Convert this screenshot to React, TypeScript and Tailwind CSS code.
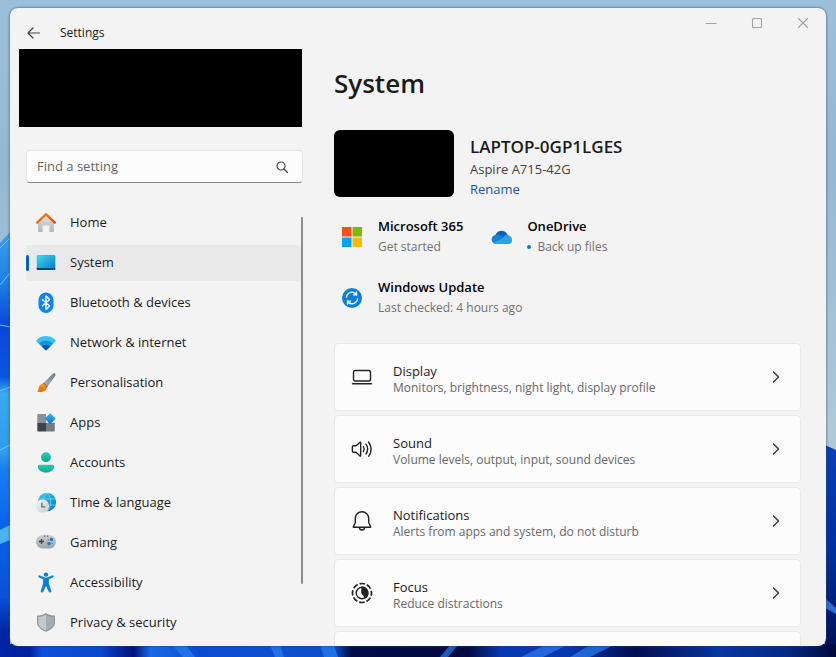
import React from "react";

type Item = { label: string; icon: React.ReactNode; active?: boolean };

const ic = "h-5 w-5 shrink-0 overflow-visible";

const HomeIcon = () => (
  <svg viewBox="0 0 20 20" className={ic} aria-hidden="true">
    <defs>
      <linearGradient id="homeWall" x1="0" y1="0" x2="0" y2="1"><stop offset="0" stopColor="#e4e4e4" /><stop offset="1" stopColor="#b4b4b4" /></linearGradient>
      <linearGradient id="homeRoof" x1="0" y1="0" x2="1" y2="1"><stop offset="0" stopColor="#f9930f" /><stop offset="1" stopColor="#d2490c" /></linearGradient>
    </defs>
    <path d="M2 9 10 1.800 18 9v9.200a.8.800 0 0 1-.8.800H13.400v-6.600H6.600V19H2.800a.8.800 0 0 1-.8-.8Z" fill="url(#homeWall)" />
    <path d="M1.200 9.600 10 1.200l8.800 8.400" fill="none" stroke="url(#homeRoof)" strokeWidth="2.300" strokeLinecap="round" strokeLinejoin="round" />
  </svg>
);

const SystemIcon = () => (
  <svg viewBox="0 0 20 20" className={ic} aria-hidden="true">
    <defs><linearGradient id="sysScreen" x1="0" y1="0" x2="1" y2="1"><stop offset="0" stopColor="#3bdcec" /><stop offset="1" stopColor="#0b78c4" /></linearGradient></defs>
    <rect x=".7" y="2" width="18.600" height="15" rx="1.200" fill="url(#sysScreen)" />
    <path d="M.7 15h18.600v.9a1.200 1.200 0 0 1-1.200 1.200H1.900A1.200 1.200 0 0 1 .7 15.900Z" fill="#0b4568" />
    <path d="M14.500 16h1M17 16h1" stroke="#5bc5e8" strokeWidth=".7" />
  </svg>
);

const BluetoothIcon = () => (
  <svg viewBox="0 0 20 20" className={ic} aria-hidden="true">
    <rect x="2.500" y="-.5" width="15" height="20.500" rx="7.500" fill="#0a84ff" />
    <path d="m6 6.200 7.600 6.900-3.600 3.500V3l3.600 3.500L6 13.300" fill="none" stroke="#fff" strokeWidth="1.400" strokeLinejoin="round" />
  </svg>
);

const WifiIcon = () => (
  <svg viewBox="0 0 20 20" className={ic} aria-hidden="true">
    <path d="M.4 7.200C5.800 1.700 14.200 1.700 19.600 7.200c.3.300.3.700 0 1L10.600 17c-.4.300-.8.300-1.200 0L.4 8.200a.7.700 0 0 1 0-1Z" fill="#35c5f2" />
    <path d="M2.800 10.400a10.200 10.200 0 0 1 14.400 0l-6.600 6.600c-.4.300-.8.300-1.200 0Z" fill="#1493dd" />
    <path d="M5.800 13.400a6 6 0 0 1 8.400 0L10.600 17c-.4.300-.8.300-1.200 0Z" fill="#0a55a5" />
  </svg>
);

const BrushIcon = () => (
  <svg viewBox="0 0 20 20" className={ic} aria-hidden="true">
    <defs>
      <linearGradient id="brushHandle" x1="1" y1="0" x2="0" y2="1"><stop offset="0" stopColor="#6c7882" /><stop offset="1" stopColor="#b3bac0" /></linearGradient>
      <linearGradient id="brushTip" x1="0" y1="0" x2="0" y2="1"><stop offset="0" stopColor="#ff9b1c" /><stop offset="1" stopColor="#ef6410" /></linearGradient>
    </defs>
    <path d="M18.900.5c.8.600.8 1.400.3 2.200L11.400 13.800 7.200 10.200 16.800.8c.7-.6 1.400-.7 2.100-.3Z" fill="url(#brushHandle)" />
    <path d="m7.800 9.700 4 3.500-1.200 1.700-4.200-3.700Z" fill="#5d6974" />
    <path d="M6.400 11.100c2.300-.2 4.500 1.600 4.200 3.900-.4 3.400-5.400 4.800-9.800 3.500 1.600-.9 1.500-1.700 1.900-3.600.4-2.200 1.800-3.600 3.700-3.800Z" fill="url(#brushTip)" />
  </svg>
);

const AppsIcon = () => (
  <svg viewBox="0 0 20 20" className={ic} aria-hidden="true">
    <defs><linearGradient id="appDiamond" x1="0" y1="0" x2="1" y2="1"><stop offset="0" stopColor="#38b9f5" /><stop offset="1" stopColor="#0876d8" /></linearGradient></defs>
    <path d="M2.200 1H10v8.700H1.300V1.900a.9.900 0 0 1 .9-.9Z" fill="#89929b" />
    <path d="M1.300 9.700H10v8.800H2.200a.9.900 0 0 1-.9-.9Z" fill="#3f454a" />
    <path d="M10 9.700h8.800v7.900a.9.900 0 0 1-.9.900H10Z" fill="#737b84" />
    <rect x="10.300" y="1.700" width="7.800" height="7.800" rx="1" transform="rotate(45 14.200 5.600)" fill="url(#appDiamond)" />
  </svg>
);

const AccountsIcon = () => (
  <svg viewBox="0 0 20 20" className={ic} aria-hidden="true">
    <defs><linearGradient id="person" x1="0" y1="0" x2="0" y2="1"><stop offset="0" stopColor="#25d0a5" /><stop offset="1" stopColor="#10a894" /></linearGradient></defs>
    <circle cx="10" cy="4.200" r="4.900" fill="url(#person)" />
    <path d="M3.600 11.700h12.800c1 0 1.700.8 1.700 1.700 0 3.600-3.400 6-8.100 6s-8.100-2.400-8.100-6c0-.9.700-1.700 1.700-1.700Z" fill="url(#person)" />
  </svg>
);

const TimeIcon = () => (
  <svg viewBox="0 0 20 20" className={ic} aria-hidden="true">
    <defs>
      <linearGradient id="globe" x1="0" y1="0" x2="1" y2="1"><stop offset="0" stopColor="#39c9ed" /><stop offset="1" stopColor="#0a78c4" /></linearGradient>
      <linearGradient id="clock" x1="0" y1="0" x2="1" y2="1"><stop offset="0" stopColor="#f4f5f6" /><stop offset="1" stopColor="#c5cbd0" /></linearGradient>
    </defs>
    <circle cx="11" cy="9" r="9.200" fill="url(#globe)" />
    <path d="M2.500 6h17M11 12h8.500M11 0c-5 5-5 13 0 18M11 0c5 5 5 13 0 18" fill="none" stroke="#72dff4" strokeWidth=".7" />
    <circle cx="6.500" cy="13" r="6.600" fill="url(#clock)" />
    <path d="M5.900 9.700v4.100h3.400" fill="none" stroke="#656b72" strokeWidth="1.300" />
  </svg>
);

const GamingIcon = () => (
  <svg viewBox="0 0 20 20" className={ic} aria-hidden="true">
    <defs><linearGradient id="pad" x1="0" y1="0" x2="0" y2="1"><stop offset="0" stopColor="#cbd0d4" /><stop offset="1" stopColor="#9ca3ab" /></linearGradient></defs>
    <rect y="2" width="20" height="13.500" rx="6.500" fill="url(#pad)" />
    <path d="M3 8.500h5M5.500 6v5" stroke="#3d4349" strokeWidth="1.300" />
    <path d="M8 3.200h1.200M11 3.200h1.200" stroke="#4c5259" strokeWidth="1" />
    <circle cx="15.400" cy="6.500" r="1.700" fill="#0a7bd3" /><circle cx="12.900" cy="10.600" r="1.700" fill="#0a7bd3" />
    <circle cx="12.300" cy="6.900" r=".7" fill="#777f87" /><circle cx="16" cy="10.300" r=".7" fill="#777f87" />
  </svg>
);

const AccessibilityIcon = () => (
  <svg viewBox="0 0 20 20" className={ic} aria-hidden="true">
    <circle cx="10" cy="1.600" r="2.200" fill="#0a7ed4" />
    <path d="m3.400 3.400 5 2.100c1 .4 2.200.4 3.200 0l5-2.100" fill="none" stroke="#0a84dc" strokeWidth="2.200" strokeLinecap="round" strokeLinejoin="round" />
    <path d="M7.300 5.200h5.400v5.600l2.300 7.100c.4 1.300-1.500 2.100-2.100.7L10.400 13h-.8l-2.500 5.600c-.6 1.400-2.500.6-2.100-.7l2.300-7.100Z" fill="#0a7ed4" stroke="#0a7ed4" strokeWidth=".5" strokeLinejoin="round" />
  </svg>
);

const ShieldIcon = () => (
  <svg viewBox="0 0 20 20" className={ic} aria-hidden="true">
    <path d="M10 0c2.700 1.900 5.400 2.500 9 2.600V9c0 4.600-3.600 7.700-9 9.700C4.600 16.700 1 13.600 1 9V2.600C4.600 2.500 7.300 1.900 10 0Z" fill="#8b949d" />
    <path d="M10 1.400c2.300 1.500 4.800 2.200 7.800 2.400V9c0 3.900-3 6.600-7.800 8.400Z" fill="#a4acb4" />
    <path d="M10 1.400C7.700 2.900 5.200 3.600 2.200 3.800V9c0 3.900 3 6.600 7.800 8.400Z" fill="#c3c8cd" />
  </svg>
);

const nav: Item[] = [
  { label: "Home", icon: <HomeIcon /> },
  { label: "System", icon: <SystemIcon />, active: true },
  { label: "Bluetooth & devices", icon: <BluetoothIcon /> },
  { label: "Network & internet", icon: <WifiIcon /> },
  { label: "Personalisation", icon: <BrushIcon /> },
  { label: "Apps", icon: <AppsIcon /> },
  { label: "Accounts", icon: <AccountsIcon /> },
  { label: "Time & language", icon: <TimeIcon /> },
  { label: "Gaming", icon: <GamingIcon /> },
  { label: "Accessibility", icon: <AccessibilityIcon /> },
  { label: "Privacy & security", icon: <ShieldIcon /> },
];

const line = { fill: "none", stroke: "#222", strokeWidth: 1.4, strokeLinecap: "round", strokeLinejoin: "round" } as const;

const cards = [
  {
    title: "Display",
    text: "Monitors, brightness, night light, display profile",
    icon: <svg viewBox="0 0 20 20" className={ic} aria-hidden="true" {...line}><rect x="1.500" y="3.500" width="17" height="10.500" rx="1.800" /><path d="M.5 16.800h19" /></svg>,
  },
  {
    title: "Sound",
    text: "Volume levels, output, input, sound devices",
    icon: <svg viewBox="0 0 20 20" className={ic} aria-hidden="true" {...line}><path d="M.4 7.800c0-.6.400-1 1-1h2.700L8 3.300c.3-.3.700-.1.700.3v13c0 .4-.4.600-.7.300L4.100 13.300H1.400a1 1 0 0 1-1-1ZM11.400 7.500c1 1.600 1 3.600 0 5.200M14 5.200c2 2.900 2 6.900 0 9.800M16.600 3c3.100 4.400 3.100 10 0 14.300" /></svg>,
  },
  {
    title: "Notifications",
    text: "Alerts from apps and system, do not disturb",
    icon: <svg viewBox="0 0 20 20" className={ic} aria-hidden="true" {...line}><path d="M10 .7c-3.900 0-6.700 3-6.700 6.800v4.200l-1.900 3.800c-.2.400 0 .8.500.8h16.200c.5 0 .7-.4.5-.8l-1.900-3.800V7.500C16.700 3.700 13.900.7 10 .7ZM7.500 16.500a2.500 2.500 0 0 0 5 0" /></svg>,
  },
  {
    title: "Focus",
    text: "Reduce distractions",
    icon: <svg viewBox="0 0 20 20" className={ic} aria-hidden="true" {...line}><circle cx="10" cy="10" r="9.500" strokeWidth="1.700" strokeLinecap="butt" strokeDasharray="5.460 2" strokeDashoffset="2.730" /><circle cx="10" cy="10" r="5.800" /><path d="M10 4.200a5.800 5.800 0 0 1 3.500 10.400L10 10Z" fill="#222" /></svg>,
  },
];

const Wallpaper = () => (
  <svg viewBox="0 0 836 657" preserveAspectRatio="none" className="absolute inset-0 h-full w-full" aria-hidden="true">
    <defs>
      <linearGradient id="sky" x1="0" y1="0" x2="0" y2="1"><stop offset="0" stopColor="#9cbfdb" /><stop offset=".25" stopColor="#94b8d2" /><stop offset=".65" stopColor="#b0c8d8" /></linearGradient>
      <linearGradient id="leftBloom" x1="0" y1="0" x2="0" y2="1"><stop offset="0" stopColor="#3a9fea" /><stop offset=".12" stopColor="#1c7fe6" /><stop offset=".22" stopColor="#0848dc" /><stop offset=".34" stopColor="#0a55e0" /><stop offset=".38" stopColor="#3aa8f0" /><stop offset=".52" stopColor="#2f9bec" /><stop offset=".56" stopColor="#1a7cf0" /><stop offset=".7" stopColor="#0a62ea" /><stop offset=".86" stopColor="#0a50d8" /><stop offset=".94" stopColor="#0026a4" /><stop offset="1" stopColor="#0020a0" /></linearGradient>
      <linearGradient id="rightBloom" x1="0" y1="0" x2="0" y2="1"><stop offset="0" stopColor="#0b3fb5" /><stop offset=".5" stopColor="#0030a0" /><stop offset="1" stopColor="#000d50" /></linearGradient>
      <linearGradient id="floor" x1="0" y1="0" x2="1" y2="0"><stop offset="0" stopColor="#0026a4" /><stop offset=".035" stopColor="#0020a0" /><stop offset=".05" stopColor="#0a50d8" /><stop offset=".12" stopColor="#0a48cc" /><stop offset=".16" stopColor="#02107a" /><stop offset=".18" stopColor="#1a6ae4" /><stop offset=".24" stopColor="#0a4cd0" /><stop offset=".3" stopColor="#0b50d0" /><stop offset=".4" stopColor="#0b50c8" /><stop offset=".42" stopColor="#020c48" /><stop offset=".56" stopColor="#020a40" /><stop offset=".6" stopColor="#0838b0" /><stop offset=".68" stopColor="#0838b0" /><stop offset=".76" stopColor="#020d50" /><stop offset=".86" stopColor="#0737a0" /><stop offset=".94" stopColor="#052a88" /><stop offset="1" stopColor="#01083a" /></linearGradient>
    </defs>
    <rect width="836" height="657" fill="url(#sky)" />
    <path d="M0 243 10 232V657H0Z" fill="url(#leftBloom)" />
    <path d="M0 248 10 238M0 285l10-12M0 325l10 2M0 391l10-4M0 450l10-5" stroke="#6cc6f4" strokeWidth="1" />
    <path d="M0 530 10 525V540L0 544Z" fill="#4bb4f0" />
    <path d="M825 445l11 5v207h-11Z" fill="url(#rightBloom)" />
    <path d="M825 598l11 10v6l-11-6Z" fill="#2c6fd0" />
    <path d="M0 644h836v13H0Z" fill="url(#floor)" />
    <path d="M172 645h14l9 12h-12ZM270 645h10l4 12h-9ZM320 645h14l4 12h-14ZM450 645h8l-10 12h-8ZM545 645h22l-24 12h-22ZM590 645h24l-24 12h-20Z" fill="#2a7ff0" opacity=".7" />
  </svg>
);

export default function App() {
  return (
    <div className="relative h-screen overflow-hidden bg-[#94b8d2] font-['Open_Sans','Noto_Sans',sans-serif] text-[#1b1b1b]">
      <Wallpaper />
      <div className="relative h-full pt-2 pr-[10px] pb-[11px] pl-[10px]">
        <div className="relative flex h-full flex-col overflow-hidden rounded-lg bg-[#f3f3f3] shadow-[0_0_2px_1px_rgba(40,70,100,0.45)]">
          <header className="flex h-[41px] shrink-0 items-start justify-between">
            <div className="flex items-center gap-[18px] pt-[15px] pl-4">
              <button type="button" aria-label="Back" className="h-4 w-4">
                <svg viewBox="0 0 16 16" className="h-4 w-4" fill="none" stroke="#444" strokeWidth="1.200" strokeLinecap="round" strokeLinejoin="round"><path d="M13.500 8H2M7 3 2 8l5 5" /></svg>
              </button>
              <span className="text-xs leading-5">Settings</span>
            </div>
            <div className="flex">
              {[
                { name: "Minimise", d: "M3 8.500h10" },
                { name: "Maximise", d: "M4.500 3.500h7a1 1 0 0 1 1 1v7a1 1 0 0 1-1 1h-7a1 1 0 0 1-1-1v-7a1 1 0 0 1 1-1Z" },
                { name: "Close", d: "m3.500 3.500 9 9M12.500 3.500l-9 9" },
              ].map((b) => (
                <button key={b.name} type="button" aria-label={b.name} className="flex h-[30px] w-[46px] items-center justify-center">
                  <svg viewBox="0 0 16 16" className="h-4 w-4" fill="none" stroke="#a2a2a2" strokeWidth="1.100" strokeLinecap="round"><path d={b.d} /></svg>
                </button>
              ))}
            </div>
          </header>

          <div className="flex min-h-0 flex-1">
            <aside className="flex w-[300px] shrink-0 flex-col pr-[7px] pl-[9px]">
              <div className="mr-px h-[78px] shrink-0 bg-black" />
              <div className="mt-[23px] ml-[7px] flex h-[33px] shrink-0 items-center rounded border border-[#e5e5e5] border-b-[#8a8a8a] bg-[#fcfcfc] pr-3 pl-[10px]">
                <input type="text" aria-label="Find a setting" placeholder="Find a setting" className="min-w-0 flex-1 bg-transparent text-[13px] outline-none placeholder:text-[#686868]" />
                <svg viewBox="0 0 16 16" className="h-4 w-4" fill="none" stroke="#444" strokeWidth="1.200" strokeLinecap="round" aria-hidden="true"><circle cx="7" cy="7" r="4" /><path d="m10 10 3.500 3.500" /></svg>
              </div>
              <div className="mt-[22px] ml-[7px] flex min-h-0 flex-1 overflow-hidden">
                <nav className="flex min-w-0 flex-1 flex-col gap-1">
                  {nav.map((n) => (
                    <a
                      key={n.label}
                      href="#"
                      aria-current={n.active ? "page" : undefined}
                      className={n.active ? "flex h-9 shrink-0 items-center rounded bg-[#e9e9e9] text-[13px]" : "flex h-9 shrink-0 items-center rounded text-[13px]"}
                    >
                      <span className={n.active ? "h-4 w-[3px] rounded-full bg-[#0560c2]" : "h-4 w-[3px]"} />
                      <span className="mr-[14px] ml-[7px]">{n.icon}</span>
                      {n.label}
                    </a>
                  ))}
                </nav>
                <div className="mt-3 h-[367px] w-[2px] shrink-0 rounded-full bg-[#8c8c8c]" />
              </div>
            </aside>

            <main className="min-w-0 flex-1 overflow-hidden pr-[25px] pl-6">
              <h1 className="pt-3 text-[26px] leading-[44px] font-semibold">System</h1>
              <section className="mt-[25px] flex h-[67px] gap-4">
                <div className="w-[120px] shrink-0 rounded-md bg-black" />
                <div className="pt-[6px]">
                  <h2 className="text-[17px] leading-[22px] font-semibold">LAPTOP-0GP1LGES</h2>
                  <p className="text-[13px] leading-[22px] text-[#444]">Aspire A715-42G</p>
                  <a href="#" className="block text-[13px] leading-[18px] text-[#1a55a5]">Rename</a>
                </div>
              </section>

              <section className="mt-[19px] flex flex-wrap gap-x-7 gap-y-5">
                <div className="flex items-center">
                  <svg viewBox="0 0 20 20" className="mx-2 h-5 w-5" aria-hidden="true"><path d="M0 0h9.500v9.500H0Z" fill="#f25022" /><path d="M10.500 0H20v9.500h-9.500Z" fill="#7fba00" /><path d="M0 10.500h9.500V20H0Z" fill="#00a4ef" /><path d="M10.500 10.500H20V20h-9.500Z" fill="#ffb900" /></svg>
                  <div className="ml-2">
                    <h3 className="text-[13px] leading-5 font-semibold text-black">Microsoft 365</h3>
                    <p className="pt-px text-xs leading-5 text-[#727272]">Get started</p>
                  </div>
                </div>
                <div className="flex items-center">
                  <svg viewBox="0 0 22 20" className="h-5 w-[22px]" aria-hidden="true">
                    <path d="M4.500 8C6.500 2.600 14 2 16.800 8l-5 6-8-2Z" fill="#0a62ba" />
                    <path d="M5.400 7.800c2-.4 3.600.1 5 1.200l5 3-10 5C-.8 16.700-1.300 8.600 5.400 7.800Z" fill="#1580d8" />
                    <path d="M11.500 11.400c2-3 4.500-4 6.500-2.800 4.500 1.200 4 8.400-.5 8.400H5.200c-1.300 0-2.400-.5-3.200-1.200Z" fill="#29a4ea" />
                  </svg>
                  <div className="ml-[14px]">
                    <h3 className="text-[13px] leading-5 font-semibold text-black">OneDrive</h3>
                    <p className="flex items-center gap-[6px] pt-px text-xs leading-5 text-[#727272]"><span className="h-1 w-1 rounded-full bg-[#0a78d4]" />Back up files</p>
                  </div>
                </div>
                <div className="flex w-full items-center">
                  <svg viewBox="0 0 20 20" className="mx-2 h-5 w-5" aria-hidden="true"><circle cx="10" cy="10" r="10" fill="#0b80d8" /><path d="M4.500 9a5.600 5.600 0 0 1 10-2.500V4M14.500 6.800h-3M15.500 11a5.600 5.600 0 0 1-10 2.500V16M5.500 13.200h3" fill="none" stroke="#fff" strokeWidth="1.300" strokeLinecap="round" /></svg>
                  <div className="ml-2">
                    <h3 className="text-[13px] leading-5 font-semibold text-black">Windows Update</h3>
                    <p className="pt-px text-xs leading-5 text-[#727272]">Last checked: 4 hours ago</p>
                  </div>
                </div>
              </section>

              <section className="mt-[25px] flex flex-col gap-1">
                {cards.map((c) => (
                  <button key={c.title} type="button" className="flex h-[68px] shrink-0 items-center rounded border border-[#e8e8e8] bg-[#fcfcfc] pr-4 pl-[17px] text-left">
                    {c.icon}
                    <span className="ml-[21px] flex-1 pt-1">
                      <span className="block text-[13px] leading-[18px]">{c.title}</span>
                      <span className="block text-xs leading-4 text-[#686868]">{c.text}</span>
                    </span>
                    <svg viewBox="0 0 16 16" className="h-4 w-4" fill="none" stroke="#333" strokeWidth="1.400" strokeLinecap="round" strokeLinejoin="round" aria-hidden="true"><path d="m5.500 3 5 5-5 5" /></svg>
                  </button>
                ))}
                <div className="h-[68px] shrink-0 rounded border border-[#e8e8e8] bg-[#fcfcfc]" />
              </section>
            </main>
          </div>
        </div>
      </div>
    </div>
  );
}
